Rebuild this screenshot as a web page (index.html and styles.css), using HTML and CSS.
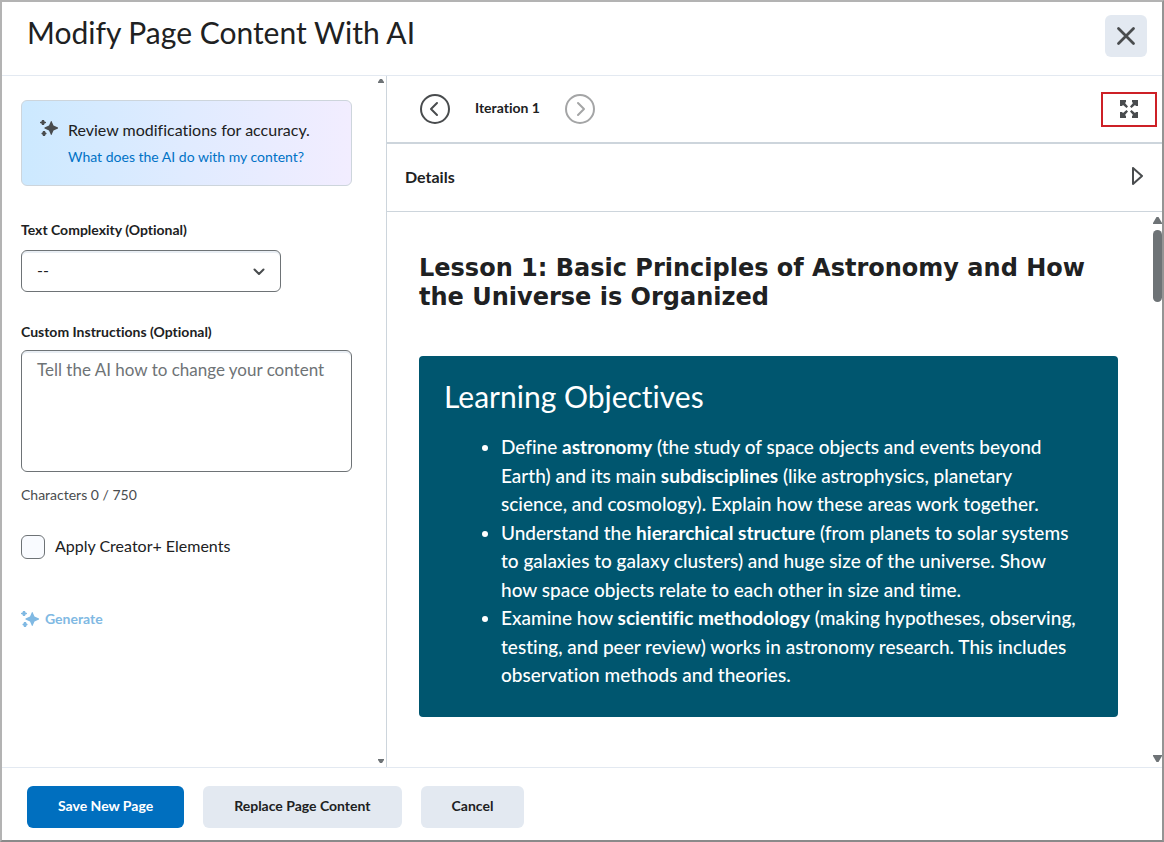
FILE: index.html
```
<!DOCTYPE html>
<html lang="en-us">
<head>
  <meta charset="utf-8">
  <meta name="viewport" content="width=device-width, initial-scale=1">
  <title>Modify Page Content With AI</title>
  <link rel="stylesheet" href="styles.css">
</head>
<body>
  <div class="dialog" role="dialog" aria-labelledby="dialog-title">
    <header class="dialog-header">
      <h1 id="dialog-title">Modify Page Content With AI</h1>
      <button type="button" class="close-button" aria-label="Close">
        <svg width="20" height="20" viewBox="0 0 20 20"><path d="M2.5 2.5l15 15M17.5 2.5l-15 15" fill="none" stroke="#494c4e" stroke-width="2.8" stroke-linecap="round"/></svg>
      </button>
    </header>

    <div class="dialog-body">
      <!-- Settings -->
      <aside class="sidebar">
        <form class="settings">
          <div class="notice">
            <svg class="sparkle" width="18" height="18" viewBox="0 0 18 18"><path d="M11.5 2L13.5 6.500L18 8.500V9.500L13.500 11.500L11.500 16H11L9 11.500L4.500 9.500V8.500L9 6.500L11 2z"/><path d="M2 1h2l.5 1.500L6 3v1l-1.500.5L4 6H2l-.5-1.500L0 4V3l1.500-.5zM3 12h2l.5 1.500L6.500 14v1l-1 .5L5 17H3l-.5-1.500L1.500 15v-1l1-.5z"/></svg>
            <div class="notice-text">
              <p>Review modifications for accuracy.</p>
              <a href="#">What does the AI do with my content?</a>
            </div>
          </div>

          <label class="field-label" for="complexity">Text Complexity (Optional)</label>
          <div class="select-wrap">
            <select id="complexity">
              <option>--</option>
            </select>
            <svg class="chevron" width="12" height="8" viewBox="0 0 12 8"><path d="M1.5 1.5L6 6l4.5-4.5" fill="none" stroke="#494c4e" stroke-width="2" stroke-linecap="round" stroke-linejoin="round"/></svg>
          </div>

          <label class="field-label" for="instructions">Custom Instructions (Optional)</label>
          <textarea id="instructions" maxlength="750" placeholder="Tell the AI how to change your content"></textarea>
          <p class="counter">Characters 0 / 750</p>

          <label class="checkbox-row">
            <input type="checkbox">
            <span>Apply Creator+ Elements</span>
          </label>

          <button type="button" class="generate-button" disabled>
            <svg class="sparkle" width="18" height="18" viewBox="0 0 18 18"><path d="M11.5 2L13.5 6.500L18 8.500V9.500L13.500 11.500L11.500 16H11L9 11.500L4.500 9.500V8.500L9 6.500L11 2z"/><path d="M2 1h2l.5 1.500L6 3v1l-1.500.5L4 6H2l-.5-1.500L0 4V3l1.500-.5zM3 12h2l.5 1.500L6.500 14v1l-1 .5L5 17H3l-.5-1.500L1.500 15v-1l1-.5z"/></svg>
            Generate
          </button>
        </form>
        <div class="scroll-track small" aria-hidden="true">
          <svg width="6" height="4" viewBox="0 0 6 4"><path d="M0 4V3l2-3h2l2 3v1z"/></svg>
          <svg class="track-end" width="6" height="4" viewBox="0 0 6 4"><path d="M0 0v1l2 3h2l2-3V0z"/></svg>
        </div>
      </aside>

      <!-- Preview -->
      <main class="preview">
        <div class="iteration-bar">
          <button type="button" class="round-button" aria-label="Previous iteration">
            <svg width="30" height="30" viewBox="0 0 30 30"><circle cx="15" cy="15" r="14"/><path d="M17 9l-6 6 6 6"/></svg>
          </button>
          <span class="iteration-name">Iteration 1</span>
          <button type="button" class="round-button" aria-label="Next iteration" disabled>
            <svg width="30" height="30" viewBox="0 0 30 30"><circle cx="15" cy="15" r="14"/><path d="M13 9l6 6-6 6"/></svg>
          </button>
          <button type="button" class="expand-button" aria-label="Full screen">
            <svg width="18" height="18" viewBox="0 0 18 18" fill="#494c4e"><path d="M0 0h6v2L5 3l3 3.500L6.500 8 3 5 2 6H0zM18 0v6h-2l-1-1-3.500 3L10 6.500 13 3l-1-1V0zM0 18v-6h2l1 1 3.500-3L8 11.500 5 15l1 1v2zM18 18h-6v-2l1-1-3-3.500 1.500-1.500 3.500 3 1-1h2z"/></svg>
          </button>
        </div>

        <button type="button" class="details-bar" aria-expanded="false">
          Details
          <svg width="12" height="18" viewBox="0 0 12 18"><path d="M1 1v16l9-8z" fill="none" stroke="#494c4e" stroke-width="2" stroke-linejoin="round"/></svg>
        </button>

        <div class="page-scroll">
          <article class="page-content">
            <h2>Lesson 1: Basic Principles of Astronomy and How the Universe is Organized</h2>
            <section class="objectives">
              <h3>Learning Objectives</h3>
              <ul>
                <li>Define <strong>astronomy</strong> (the study of space objects and events beyond Earth) and its main <strong>subdisciplines</strong> (like astrophysics, planetary science, and cosmology). Explain how these areas work together.</li>
                <li>Understand the <strong>hierarchical structure</strong> (from planets to solar systems to galaxies to galaxy clusters) and huge size of the universe. Show how space objects relate to each other in size and time.</li>
                <li>Examine how <strong>scientific methodology</strong> (making hypotheses, observing, testing, and peer review) works in astronomy research. This includes observation methods and theories.</li>
              </ul>
            </section>
          </article>
          <div class="scroll-track" aria-hidden="true">
            <svg width="9" height="7" viewBox="0 0 9 7"><path d="M0 7V6l3.500-6h2L9 6v1z"/></svg>
            <div class="scroll-thumb"></div>
            <svg class="track-end" width="9" height="7" viewBox="0 0 9 7"><path d="M0 0v1l3.500 6h2L9 1V0z"/></svg>
          </div>
        </div>
      </main>
    </div>

    <footer class="dialog-footer">
      <button type="button" class="button primary">Save New Page</button>
      <button type="button" class="button">Replace Page Content</button>
      <button type="button" class="button">Cancel</button>
    </footer>
  </div>
</body>
</html>
```
FILE: styles.css
```
* {
  box-sizing: border-box;
}

body {
  margin: 0;
  color: #202122;
  background: #fff;
  font-family: Lato, "Liberation Sans", sans-serif;
  font-size: 16px;
  font-variant-ligatures: none;
}

h1, h2, h3, p, ul {
  margin: 0;
}

button, select, textarea {
  font: inherit;
  font-variant-ligatures: none;
  color: inherit;
}

button {
  padding: 0;
  border: none;
  background: none;
  cursor: pointer;
}

svg {
  display: block;
  flex-shrink: 0;
}

.dialog {
  display: flex;
  flex-direction: column;
  height: 100vh;
  border: 2px solid #b3b3b3;
  border-right-color: #949494;
  border-bottom-color: #8a8a8a;
}

/* Header */
.dialog-header {
  display: flex;
  justify-content: space-between;
  padding: 13px 15px 18px 25px;
  border-bottom: 1px solid #e3e9f1;
}

.dialog-header h1 {
  font-size: 30px;
  font-weight: 400;
  line-height: 34px;
}

.close-button {
  display: flex;
  align-items: center;
  justify-content: center;
  width: 42px;
  height: 42px;
  border-radius: 6px;
  background: #e3e9f1;
}

.dialog-body {
  display: grid;
  grid-template-columns: 385px 1fr;
  flex: 1;
  min-height: 0;
}

/* Sidebar */
.sidebar {
  display: flex;
  border-right: 1px solid #cdd5dc;
}

.settings {
  flex: 1;
  padding: 24px 24px 0 19px;
}

.notice {
  display: flex;
  gap: 10px;
  margin-bottom: 34px;
  padding: 18px;
  border: 1px solid #cdd5dc;
  border-radius: 6px;
  background: linear-gradient(to right, #cce9ff, #e0ebff 50%, #f2edff);
}

.sparkle {
  fill: #494c4e;
}

.notice-text p {
  line-height: 22px;
}

.notice-text a {
  display: block;
  margin-top: 6px;
  color: #0072c6;
  font-size: 14px;
  line-height: 20px;
  text-decoration: none;
}

.field-label {
  display: block;
  margin-bottom: 10px;
  font-size: 14px;
  font-weight: 700;
  line-height: 20px;
}

.select-wrap {
  position: relative;
  width: 260px;
  margin-bottom: 30px;
}

select, textarea {
  display: block;
  width: 100%;
  border: 1px solid #6e7376;
  border-radius: 6px;
  background: #fff;
  box-shadow: inset 0 2px 0 #e9eef4;
}

select {
  height: 42px;
  padding: 0 15px 4px;
  appearance: none;
}

.chevron {
  position: absolute;
  top: 18px;
  right: 16px;
  pointer-events: none;
}

.settings .field-label + textarea {
  margin-top: -2px;
}

textarea {
  height: 122px;
  padding: 8px 15px;
  font-size: 17px;
  line-height: 22px;
  resize: none;
}

textarea::placeholder {
  color: #6e7376;
}

.counter {
  margin-top: 13px;
  color: #494c4e;
  font-size: 14px;
  line-height: 20px;
}

.checkbox-row {
  display: flex;
  align-items: center;
  gap: 10px;
  margin-top: 30px;
  line-height: 24px;
}

.checkbox-row span {
  line-height: 20px;
  padding-bottom: 2px;
}

.checkbox-row input {
  width: 24px;
  height: 24px;
  margin: 0;
  border: 1px solid #6e7376;
  border-radius: 6px;
  background: #f9fbff;
  appearance: none;
}

.generate-button {
  display: flex;
  align-items: center;
  gap: 6px;
  margin-top: 50px;
  color: #80b9e3;
  font-size: 14px;
  font-weight: 700;
  line-height: 20px;
}

.generate-button .sparkle {
  fill: #80b9e3;
}

/* Scroll arrows and thumb */
.scroll-track {
  display: flex;
  flex-direction: column;
  align-items: center;
  gap: 6px;
  width: 10px;
  padding: 5px 0;
  fill: #6e7376;
}

.scroll-track.small {
  padding: 3px 0 4px;
}

.scroll-thumb {
  width: 9px;
  height: 72px;
  border-radius: 5px;
  background: #6e7376;
}

.track-end {
  margin-top: auto;
}

/* Preview */
.preview {
  display: flex;
  flex-direction: column;
  min-width: 0;
}

.iteration-bar {
  display: flex;
  align-items: center;
  gap: 25px;
  height: 68px;
  padding: 0 5px 0 33px;
  border-bottom: 2px solid #cdd5dc;
}

.round-button svg {
  fill: none;
  stroke: #494c4e;
  stroke-width: 2;
  stroke-linecap: round;
  stroke-linejoin: round;
}

.round-button:disabled svg {
  stroke: #a4a5a6;
}

.iteration-name {
  padding-bottom: 4px;
  font-size: 14px;
  font-weight: 700;
}

.expand-button {
  display: flex;
  align-items: center;
  justify-content: center;
  width: 56px;
  height: 35px;
  margin-left: auto;
  border: 2px solid #cd2026;
}

.details-bar {
  display: flex;
  align-items: center;
  justify-content: space-between;
  height: 68px;
  padding: 0 18px 3px;
  border-bottom: 1px solid #cdd5dc;
  font-weight: 700;
}

.page-scroll {
  display: flex;
  flex: 1;
  min-height: 0;
}

.page-content {
  flex: 1;
  padding: 42px 34px 0 32px;
}

.page-content h2 {
  margin-bottom: 44px;
  font-family: "DejaVu Sans", Verdana, sans-serif;
  font-size: 24px;
  line-height: 29px;
}

.objectives {
  padding: 25px 25px 27px;
  border-radius: 4px;
  color: #fff;
  background: #00566f;
}

.objectives h3 {
  margin-bottom: 22px;
  font-size: 30px;
  font-weight: 400;
  line-height: 30px;
}

.objectives ul {
  padding: 0 12px 0 57px;
  font-size: 19px;
  font-weight: 500;
  line-height: 1.5;
}

/* Footer */
.dialog-footer {
  display: flex;
  gap: 19px;
  padding: 18px 25px 12px;
  border-top: 1px solid #e3e9f1;
}

.button {
  height: 42px;
  padding: 0 31px 4px;
  border-radius: 6px;
  background: #e3e9f1;
  font-size: 14px;
  font-weight: 700;
}

.button.primary {
  color: #fff;
  background: #006fbf;
}
```
